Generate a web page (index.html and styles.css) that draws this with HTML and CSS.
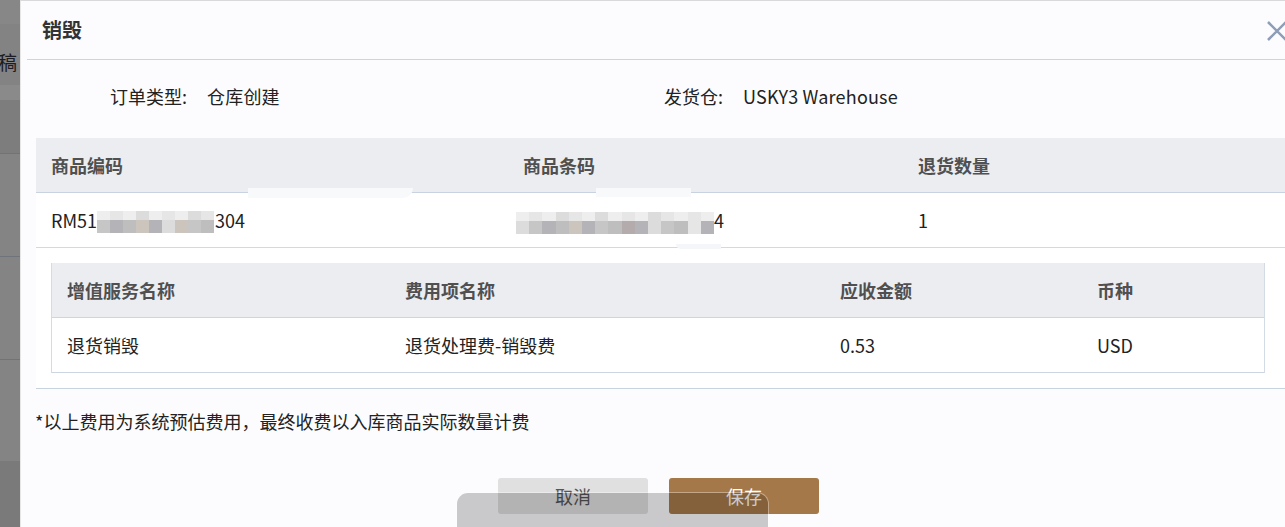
FILE: index.html
```html
<!DOCTYPE html>
<html lang="zh-CN">
<head>
<meta charset="utf-8">
<title>销毁</title>
<link rel="stylesheet" href="styles.css">
</head>
<body>
<div class="page">
  <aside class="backdrop">
    <div class="bd r1"></div>
    <div class="bd r2"><span class="bd-text t-gao">稿</span></div>
    <div class="bd r3"></div>
    <div class="bd r4"></div>
    <div class="bd r5 lined"><span class="bd-text t-two">2</span></div>
    <div class="bd r6 lined"></div>
    <div class="bd r7 lined"></div>
    <div class="bd r8"></div>
  </aside>

  <section class="dialog">
    <header class="dlg-head">
      <h1 class="dlg-title">销毁</h1>
      <svg class="dlg-close" width="18" height="20" viewBox="0 0 18 20" aria-label="关闭">
        <path d="M1 1 L19 19 M19 1 L1 19" stroke="#8f9eb8" stroke-width="2.6" fill="none"/>
      </svg>
    </header>

    <div class="dlg-body">
      <div class="info">
        <div class="info-item">
          <span class="info-label">订单类型:</span>
          <span class="info-value">仓库创建</span>
        </div>
        <div class="info-item">
          <span class="info-label">发货仓:</span>
          <span class="info-value">USKY3 Warehouse</span>
        </div>
      </div>

      <div class="t1">
        <div class="t1-row t1-head">
          <div class="cell">商品编码</div>
          <div class="cell">商品条码</div>
          <div class="cell">退货数量</div>
        </div>
        <div class="t1-row t1-data">
          <div class="cell">RM51<span class="blur b-code">
              <span class="brow top"><i class="g1"></i><i class="g2"></i><i class="g1"></i><i class="g3"></i><i class="g1"></i><i class="g2"></i><i class="g1"></i><i class="g3"></i><i class="g2"></i></span>
              <span class="brow bot"><i class="g4"></i><i class="g5"></i><i class="g6"></i><i class="g7"></i><i class="g5"></i><i class="g3"></i><i class="g7"></i><i class="g4"></i><i class="g6"></i></span>
            </span>304</div>
          <div class="cell"><span class="blur b-bar">
              <span class="brow top"><i class="g1"></i><i class="g2"></i><i class="g1"></i><i class="g3"></i><i class="g2"></i><i class="g1"></i><i class="g3"></i><i class="g1"></i><i class="g2"></i><i class="g1"></i><i class="g3"></i><i class="g2"></i><i class="g1"></i><i class="g2"></i><i class="g1"></i></span>
              <span class="brow bot"><i class="g3"></i><i class="g4"></i><i class="g5"></i><i class="g6"></i><i class="g7"></i><i class="g5"></i><i class="g4"></i><i class="g6"></i><i class="g8"></i><i class="g5"></i><i class="g3"></i><i class="g4"></i><i class="g6"></i><i class="g2"></i><i class="g5"></i></span>
            </span>4</div>
          <div class="cell">1</div>
        </div>
        <div class="t1-expand">
          <div class="t2">
            <div class="t2-row t2-head">
              <div class="cell">增值服务名称</div>
              <div class="cell">费用项名称</div>
              <div class="cell">应收金额</div>
              <div class="cell">币种</div>
            </div>
            <div class="t2-row t2-data">
              <div class="cell">退货销毁</div>
              <div class="cell">退货处理费-销毁费</div>
              <div class="cell">0.53</div>
              <div class="cell">USD</div>
            </div>
          </div>
        </div>
        <span class="smear s1"></span>
        <span class="smear s2"></span>
        <span class="smear s3"></span>
      </div>

      <p class="note">*以上费用为系统预估费用，最终收费以入库商品实际数量计费</p>

      <div class="actions">
        <button class="btn btn-cancel">取消</button>
        <button class="btn btn-save">保存</button>
      </div>
    </div>

    <div class="toast"></div>
  </section>
</div>
</body>
</html>
```

FILE: styles.css
```css
* { box-sizing: border-box; }
html, body {
  margin: 0;
  padding: 0;
  height: 100%;
  overflow: hidden;
}
body {
  font-family: "Noto Sans CJK SC", "Microsoft YaHei", sans-serif;
  font-size: 18px;
  color: #222;
  background: #858585;
}
.page {
  display: flex;
  height: 527px;
  width: 1285px;
  overflow: hidden;
}

/* backdrop strip */
.backdrop {
  width: 20px;
  flex: 0 0 20px;
  display: flex;
  flex-direction: column;
  overflow: hidden;
}
.bd { position: relative; overflow: hidden; }
.bd.lined { border-top: 1px solid #6f747b; }
.r1 { height: 24px; background: #878787; }
.r2 { height: 61px; background: #838383; }
.r3 { height: 15px; background: #8a8a8a; }
.r4 { height: 53px; background: #7d7d7d; }
.r5 { height: 103px; background: #848484; }
.r6 { height: 103px; background: #848484; }
.r7 { height: 102px; background: #848484; }
.r8 { flex: 1; background: #7a7a7a; }
.bd-text {
  display: block;
  line-height: 20px;
  color: #1c1c24;
  white-space: nowrap;
}
.t-gao { margin: 28px 0 0 -2px; font-size: 19px; }
.t-two { margin: 121px 0 0 -5px; font-size: 17px; }

/* dialog */
.dialog {
  position: relative;
  flex: 1;
  background: #fcfcfe;
  border-top: 1px solid #d9d9dc;
  border-left: 1px solid #e6e6e6;
  overflow: hidden;
  display: flex;
  flex-direction: column;
}
.dlg-head {
  height: 59px;
  margin-left: 6px;
  border-bottom: 1px solid #cdd3e3;
  display: flex;
  align-items: center;
  justify-content: space-between;
  padding-left: 15px;
}
.dlg-title {
  margin: 0;
  font-size: 20px;
  font-weight: 700;
  color: #333;
  line-height: 26px;
}
.dlg-close { display: block; margin-top: 1px; }

.dlg-body {
  padding-left: 15px;
  display: flex;
  flex-direction: column;
}

/* info */
.info {
  height: 78px;
  display: grid;
  grid-template-columns: 536px 536px;
  align-items: center;
  padding-bottom: 7px;
}
.info-item { display: flex; align-items: center; line-height: 24px; color: #222; }
.info-label { width: 171px; text-align: right; padding-right: 20px; }
.info-value { letter-spacing: 0.2px; }

/* table 1 */
.t1 { position: relative; background: #fff; }
.t1-row {
  display: grid;
  grid-template-columns: 472px 395px 1fr;
  height: 55px;
  align-items: center;
}
.t1-head { background: #ecedf1; border-bottom: 1px solid #c9d2e1; }
.t1-data { border-bottom: 1px solid #d3d9e3; }
.cell {
  padding-left: 15px;
  white-space: nowrap;
  line-height: 24px;
  display: flex;
  align-items: center;
}
.t1-head .cell, .t2-head .cell { font-weight: 700; color: #505050; }
.t1-expand {
  padding: 15px 20px 15px 15px;
  border-bottom: 1px solid #c8d3e0;
}

/* table 2 */
.t2 {
  border-left: 1px solid #d5dbe5;
  border-right: 1px solid #d5dbe5;
}
.t2-row {
  display: grid;
  grid-template-columns: 338px 435px 257px 1fr;
  height: 55px;
  align-items: center;
}
.t2-head { background: #ecedf1; border-bottom: 1px solid #cdd4e2; }
.t2-data { background: #fff; border-bottom: 1px solid #cdd4e2; }

/* blurred mosaic */
.blur {
  display: inline-flex;
  flex-direction: column;
  margin-top: 4px;
}
.b-code { width: 117px; margin-right: 1px; }
.b-bar { width: 198px; margin-left: -7px; margin-top: 6px; }
.brow { display: flex; }
.brow.top i { height: 9px; }
.brow.bot i { height: 13px; }
.brow i { display: block; flex: 1; }
.g1 { background: #eeeeee; }
.g2 { background: #e6e6e6; }
.g3 { background: #dcdcdc; }
.g4 { background: #c6c6c6; }
.g5 { background: #b4b4b8; }
.g6 { background: #bebebe; }
.g7 { background: #cbc5bd; }
.g8 { background: #b4acac; }

.smear { position: absolute; background: #f8f9fb; }
.s1 { left: 212px; top: 50px; width: 165px; height: 10px; border-radius: 0 0 40px 0; }
.s2 { left: 560px; top: 50px; width: 95px; height: 9px; }
.s3 { left: 640px; top: 106px; width: 45px; height: 5px; background: #f4f6f9; border-radius: 0 0 0 30px; }

/* note + actions */
.note {
  margin: 20px 0 0 -1px;
  line-height: 24px;
  color: #222;
}
.actions {
  margin-top: 45px;
  display: flex;
  gap: 21px;
  padding-left: 462px;
}
.btn {
  width: 150px;
  height: 36px;
  border: none;
  border-radius: 3px;
  font-family: inherit;
  font-size: 18px;
  line-height: 24px;
  padding: 0;
}
.btn-cancel { background: #e0e0e0; color: #555; }
.btn-save { background: #a5784a; color: #fff; }

/* floating toast over the buttons */
.toast {
  position: absolute;
  left: 436px;
  top: 492px;
  width: 311px;
  height: 60px;
  border-radius: 11px;
  background: rgba(0, 0, 0, 0.2);
  box-shadow: 0 0 0 1px rgba(255, 255, 255, 0.35);
}
```
